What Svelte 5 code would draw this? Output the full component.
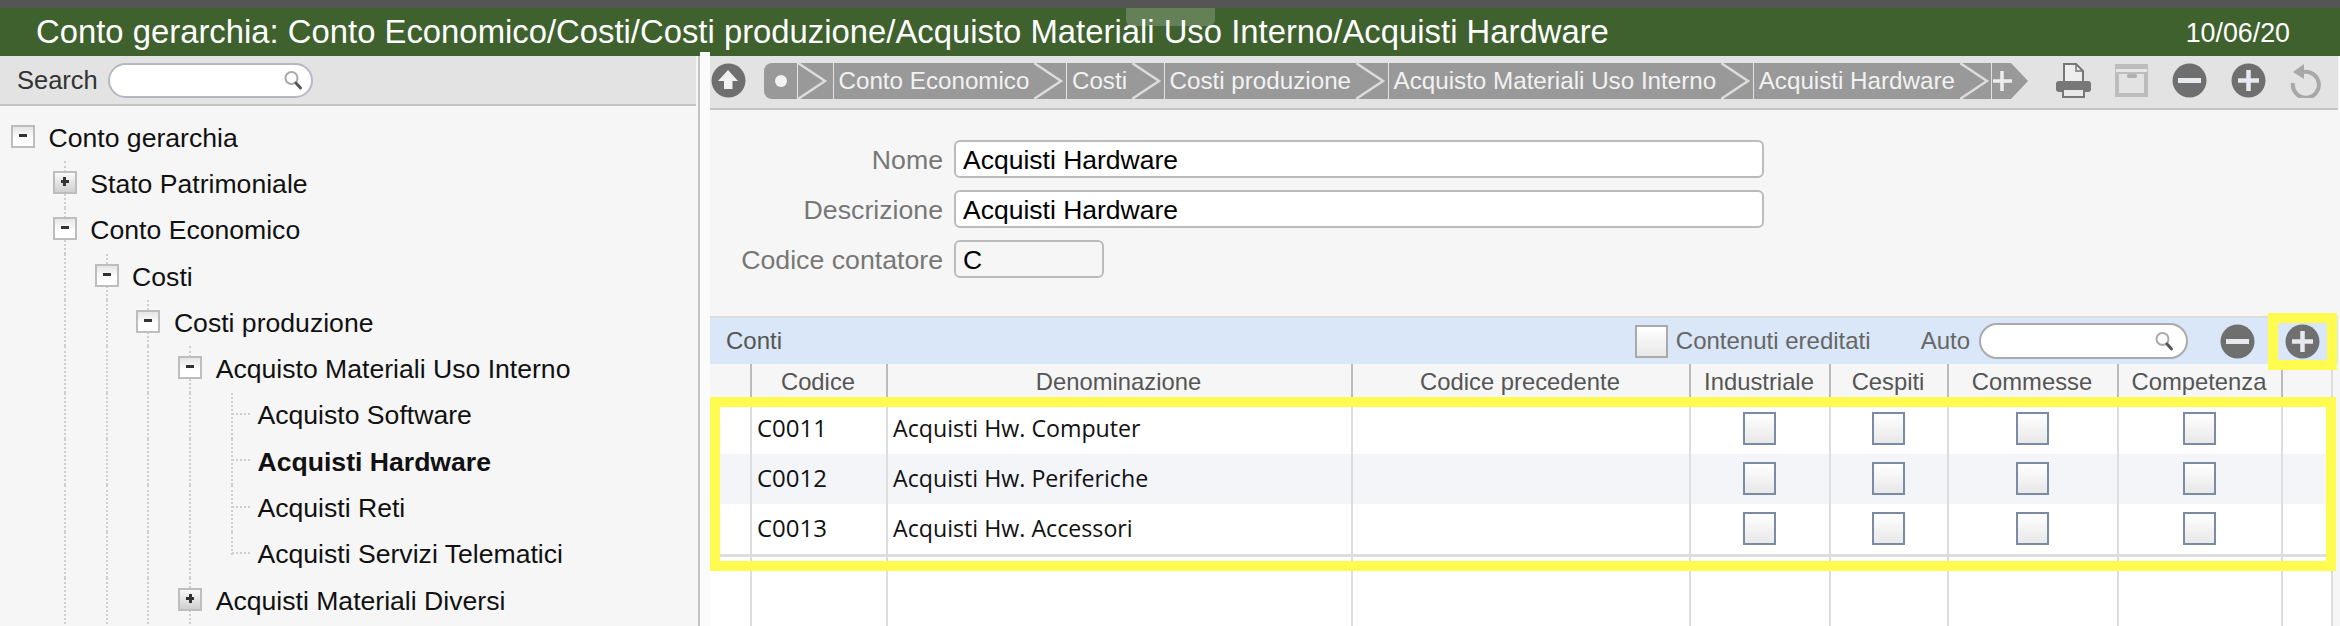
<script>
	const crumbs = ['Conto Economico', 'Costi', 'Costi produzione', 'Acquisto Materiali Uso Interno', 'Acquisti Hardware'];

	// guides: depths that still have a dotted line running through this row
	const tree = [
		{ label: 'Conto gerarchia', depth: 0, toggle: 'minus', guides: [] },
		{ label: 'Stato Patrimoniale', depth: 1, toggle: 'plus', guides: [1] },
		{ label: 'Conto Economico', depth: 1, toggle: 'minus', guides: [1] },
		{ label: 'Costi', depth: 2, toggle: 'minus', guides: [1, 2] },
		{ label: 'Costi produzione', depth: 3, toggle: 'minus', guides: [1, 2, 3] },
		{ label: 'Acquisto Materiali Uso Interno', depth: 4, toggle: 'minus', guides: [1, 2, 3, 4] },
		{ label: 'Acquisto Software', depth: 5, guides: [1, 2, 3, 4, 5] },
		{ label: 'Acquisti Hardware', depth: 5, guides: [1, 2, 3, 4, 5], current: true },
		{ label: 'Acquisti Reti', depth: 5, guides: [1, 2, 3, 4, 5] },
		{ label: 'Acquisti Servizi Telematici', depth: 5, guides: [1, 2, 3, 4, 5], last: true },
		{ label: 'Acquisti Materiali Diversi', depth: 4, toggle: 'plus', guides: [1, 2, 3, 4] }
	];

	const columns = ['', 'Codice', 'Denominazione', 'Codice precedente', 'Industriale', 'Cespiti', 'Commesse', 'Competenza', ''];

	const rows = [
		{ code: 'C0011', name: 'Acquisti Hw. Computer' },
		{ code: 'C0012', name: 'Acquisti Hw. Periferiche' },
		{ code: 'C0013', name: 'Acquisti Hw. Accessori' }
	];
</script>

{#snippet magnifier()}
	<svg class="magnifier" width="20" height="22" viewBox="0 0 20 22">
		<circle cx="8.5" cy="9" r="6" fill="#fff" stroke="#a9a9a9" stroke-width="2" />
		<path d="M13 14l4.5 5" stroke="#555" stroke-width="3" stroke-linecap="round" />
	</svg>
{/snippet}

{#snippet circleIcon(kind)}
	<svg width="35" height="35" viewBox="0 0 35 35">
		<circle cx="17.5" cy="17.5" r="17" fill="#6f6f6f" />
		{#if kind === 'plus'}
			<path d="M17.5 7v21M7 17.5h21" stroke="#e6e9ee" stroke-width="4.5" />
		{:else if kind === 'minus'}
			<path d="M6 17.5h23" stroke="#e6e9ee" stroke-width="5" />
		{:else}
			<path d="M17 7l10 11h-5.5v8h-8.5v-8h-6z" fill="#f0f0f0" />
		{/if}
	</svg>
{/snippet}

{#snippet chevron()}
	<svg class="chevron" width="31.5" height="36" viewBox="0 0 31.5 36">
		<path d="M0 0l27 18L0 36" fill="none" stroke="#dcdcdc" stroke-width="2.5" />
	</svg>
{/snippet}

<div class="page">
	<div class="topline"></div>
	<header class="title">
		<span>Conto gerarchia: Conto Economico/Costi/Costi produzione/Acquisto Materiali Uso Interno/Acquisti Hardware</span>
		<span class="date">10/06/20</span>
	</header>

	<div class="main">
		<aside class="left">
			<div class="search">
				<span>Search</span>
				<div class="pill">{@render magnifier()}</div>
			</div>
			<div class="tree">
				{#each tree as node}
					<div class="node">
						{#each { length: node.depth + 1 } as _, k}
							<span
								class="cell"
								class:line={node.guides.includes(k)}
								class:half={node.last && k === node.depth}
							>
								{#if k === node.depth}
									{#if node.toggle}
										<span class="toggle {node.toggle}"></span>
									{:else}
										<span class="stub"></span>
									{/if}
								{/if}
							</span>
						{/each}
						<span class="label" class:current={node.current}>{node.label}</span>
					</div>
				{/each}
			</div>
		</aside>

		<div class="splitter"></div>

		<section class="right">
			<div class="toolbar">
				{@render circleIcon('up')}
				<nav class="crumbs">
					<span class="home"><i></i></span>
					<span class="crumb blank">{@render chevron()}</span>
					{#each crumbs as crumb}
						<span class="crumb"><b>{crumb}</b>{@render chevron()}</span>
					{/each}
					<svg class="add" width="36" height="36" viewBox="0 0 36 36">
						<path d="M0 0h19l17 18-17 18H0z" fill="#999" />
						<path d="M10 8v20M1 18h19" stroke="#eee" stroke-width="3.5" />
					</svg>
				</nav>
				<div class="tools">
					<svg width="35" height="35" viewBox="0 0 35 35">
						<path d="M8 19V1h12l7 7v11" fill="#eee" stroke="#777" stroke-width="2" />
						<path d="M20 1v7h7" fill="none" stroke="#777" stroke-width="1.5" />
						<rect x="0" y="18" width="35" height="11" rx="3" fill="#777" />
						<path d="M7 26h21v8H7z" fill="#e8e8e8" stroke="#777" stroke-width="2" />
					</svg>
					<svg width="33" height="33" viewBox="0 0 33 33">
						<rect width="33" height="33" fill="#bdbdbd" />
						<rect x="1" y="5" width="31" height="3" fill="#e6e6e6" />
						<rect x="4" y="10" width="25" height="19" fill="#e3e3e3" />
						<rect x="12" y="10" width="10" height="4" rx="1.5" fill="#b0b0b0" />
					</svg>
					{@render circleIcon('minus')}
					{@render circleIcon('plus')}
					<svg width="31" height="35" viewBox="0 0 31 35">
						<path d="M9.5 10.5A13 13 0 1 1 3 20" fill="none" stroke="#a8a8a8" stroke-width="4" />
						<path d="M14 1v15L3 9z" fill="#a8a8a8" />
					</svg>
				</div>
			</div>

			<div class="form">
				<label for="nome">Nome</label>
				<input id="nome" value="Acquisti Hardware" readonly />
				<label for="descr">Descrizione</label>
				<input id="descr" value="Acquisti Hardware" readonly />
				<label for="cod">Codice contatore</label>
				<input id="cod" class="short" value="C" readonly />
			</div>

			<div class="bar">
				<span class="bar-title">Conti</span>
				<span class="inherit">
					<input type="checkbox" class="box plain" />
					<span>Contenuti ereditati</span>
				</span>
				<span class="auto">Auto</span>
				<div class="pill bar-pill">{@render magnifier()}</div>
				<span class="bar-minus">{@render circleIcon('minus')}</span>
				<span class="bar-plus">{@render circleIcon('plus')}</span>
			</div>

			<div class="table">
				<div class="grid head">
					{#each columns as col}
						<div class="th">{col}</div>
					{/each}
				</div>
				{#each rows as row}
					<div class="grid tr">
						<div class="td"></div>
						<div class="td text code">{row.code}</div>
						<div class="td text">{row.name}</div>
						<div class="td"></div>
						{#each { length: 4 } as _}
							<div class="td center"><input type="checkbox" class="box" /></div>
						{/each}
						<div class="td"></div>
					</div>
				{/each}
				<div class="grid filler">
					{#each columns as _}
						<div class="td"></div>
					{/each}
				</div>
			</div>
		</section>
	</div>

	<div class="mark mark-table"></div>
	<div class="mark mark-add"></div>
	<div class="notch"></div>
</div>

<style>
	:global(body) {
		margin: 0;
	}

	.page {
		position: relative;
		width: 2340px;
		height: 626px;
		overflow: hidden;
		display: flex;
		flex-direction: column;
		background: #f6f6f6;
		font-family: 'Liberation Sans', Arial, sans-serif;
	}

	.topline {
		height: 8px;
		background: #555;
		flex-shrink: 0;
	}

	.title {
		height: 48px;
		flex-shrink: 0;
		display: flex;
		align-items: center;
		justify-content: space-between;
		padding: 0 50px 1px 36px;
		box-sizing: border-box;
		background: #3e612e;
		color: #fff;
		font-size: 32.85px;
	}

	.date {
		font-size: 26.8px;
		padding-top: 3px;
	}

	.main {
		flex: 1;
		display: flex;
		min-height: 0;
	}

	.left {
		width: 696px;
		flex-shrink: 0;
		background: #f6f6f6;
	}

	.search {
		height: 50px;
		box-sizing: border-box;
		display: flex;
		align-items: center;
		gap: 10px;
		padding: 0 0 0 17px;
		background: #e3e3e3;
		border-bottom: 2px solid #c4c4c4;
		font-size: 25.5px;
		color: #333;
	}

	.pill {
		width: 205px;
		height: 35px;
		box-sizing: border-box;
		display: flex;
		align-items: center;
		justify-content: flex-end;
		padding-right: 8px;
		background: #fff;
		border: 2px solid #b6b9c2;
		border-radius: 18px;
	}

	.tree {
		padding: 9px 0 0 11px;
	}

	.node {
		height: 46.3px;
		display: flex;
		align-items: stretch;
	}

	.cell {
		position: relative;
		width: 24px;
		display: flex;
		align-items: center;
		flex-shrink: 0;
		margin-right: 17.8px;
	}

	.cell:nth-last-child(2) {
		margin-right: 13.5px;
	}

	.cell.line::before {
		content: '';
		position: absolute;
		left: 11px;
		top: 0;
		bottom: 0;
		border-left: 2px dotted #cfcfcf;
	}

	.cell.half::before {
		bottom: 50%;
	}

	.stub {
		position: relative;
		left: 12px;
		top: -2px;
		width: 18px;
		border-top: 2px dotted #cfcfcf;
	}

	.toggle {
		position: relative;
		top: -2px;
		width: 24px;
		height: 23px;
		box-sizing: border-box;
		border: 2px solid #bdbdbd;
		background: linear-gradient(#e6e6e6, #fff 60%);
	}

	.toggle.plus {
		background: linear-gradient(#fafafa, #cfcfcf);
	}

	.toggle::before {
		content: '';
		position: absolute;
		left: 6px;
		top: 7px;
		width: 8px;
		height: 3px;
		background: #333;
	}

	.toggle.plus::after {
		content: '';
		position: absolute;
		left: 8.5px;
		top: 4px;
		width: 3px;
		height: 9px;
		background: #333;
	}

	.label {
		align-self: center;
		font-size: 26.6px;
		color: #111;
		white-space: nowrap;
	}

	.label.current {
		font-weight: 700;
	}

	.splitter {
		width: 2px;
		margin: 0 10px 0 2px;
		background: #c4c4c4;
		flex-shrink: 0;
		box-shadow: 6px 0 0 4px #fbfbfb;
	}

	.right {
		width: 1628px;
		flex-shrink: 0;
		display: flex;
		flex-direction: column;
		min-height: 0;
	}

	.toolbar {
		height: 54px;
		box-sizing: border-box;
		display: flex;
		align-items: center;
		padding: 0 17px 3px 1px;
		background: #e3e3e3;
		border-bottom: 2px solid #c4c4c4;
	}

	.crumbs {
		display: flex;
		align-items: center;
		margin-left: 18px;
		height: 36px;
	}

	.home {
		width: 33px;
		height: 36px;
		display: flex;
		align-items: center;
		justify-content: center;
		background: #999;
		border-radius: 8px 0 0 8px;
	}

	.home i {
		width: 12px;
		height: 12px;
		border-radius: 50%;
		background: #f2f2f2;
	}

	.crumb {
		height: 36px;
		display: flex;
		align-items: center;
		background: #999;
		border-left: 1px solid #e3e3e3;
		color: #f2f2f2;
		font-size: 24.2px;
		white-space: nowrap;
	}

	.crumb.blank {
		padding-right: 3px;
	}

	.crumb b {
		font-weight: 400;
		padding: 0 5px 0 5px;
	}

	.chevron {
		flex-shrink: 0;
	}

	.add {
		margin-left: 1px;
	}

	.tools {
		margin-left: auto;
		display: flex;
		align-items: center;
		gap: 24px;
	}

	.form {
		height: 206px;
		box-sizing: border-box;
		padding-top: 30px;
		display: grid;
		grid-template-columns: 233px 810px;
		grid-auto-rows: 38px;
		column-gap: 11px;
		row-gap: 12px;
		align-content: start;
	}

	.form label {
		text-align: right;
		font-size: 26.7px;
		line-height: 40px;
		color: #777;
	}

	.form input {
		box-sizing: border-box;
		width: 100%;
		height: 38px;
		padding: 2px 7px 0;
		border: 2px solid #bbb;
		border-radius: 6px;
		background: #fff;
		color: #000;
		font-family: inherit;
		font-size: 26.5px;
		outline: none;
	}

	.form input.short {
		width: 150px;
		background: #f6f6f6;
	}

	.bar {
		height: 48px;
		box-sizing: border-box;
		display: flex;
		align-items: center;
		padding-left: 16px;
		background: #dae7f8;
		border-top: 2px solid #ddd;
		color: #666;
		font-size: 24px;
	}

	.bar-title {
		color: #555;
	}

	.inherit {
		margin-left: auto;
		display: flex;
		align-items: center;
		gap: 8px;
	}

	.auto {
		margin-left: 50px;
	}

	.bar-pill {
		width: 209px;
		height: 36px;
		margin-left: 9px;
		padding-right: 12px;
		border-color: #aaa;
	}

	.bar-minus {
		margin-left: 32px;
		display: flex;
	}

	.bar-plus {
		margin: 0 18px 0 30px;
		display: flex;
	}

	.table {
		flex: 1;
		display: flex;
		flex-direction: column;
		width: 1621px;
		background: #fff;
		border-right: 2px solid #ddd;
		min-height: 0;
	}

	.grid {
		display: grid;
		grid-template-columns: 40px 136px 465px 338px 140px 118px 170px 164px 50px;
	}

	.head {
		height: 40px;
		background: #f6f6f6;
	}

	.th {
		height: 36px;
		line-height: 36px;
		padding-right: 2px;
		text-align: center;
		font-size: 23.8px;
		color: #555;
		border-left: 2px solid #bbb;
		box-sizing: border-box;
		white-space: nowrap;
	}

	.th:first-child,
	.td:first-child {
		border-left: none;
	}

	.tr {
		height: 50px;
	}

	.tr:nth-child(3) {
		background: #f4f5f9;
	}

	.td {
		border-left: 2px solid #ddd;
		box-sizing: border-box;
		min-width: 0;
	}

	.td.text {
		display: flex;
		align-items: center;
		padding: 0 0 3px 5px;
		font-family: 'Open Sans', sans-serif;
		font-size: 23.2px;
		color: #111;
		white-space: nowrap;
	}

	.td.code {
		font-size: 24px;
	}

	.td.center {
		display: flex;
		align-items: center;
		justify-content: center;
		padding: 0 2px 1px 0;
	}

	.filler {
		flex: 1;
		border-top: 3px solid #ddd;
	}

	.box {
		appearance: none;
		width: 33px;
		height: 33px;
		margin: 0;
		box-sizing: border-box;
		border: 2px solid #7b8ba3;
		background: linear-gradient(#fff, #e8e8e8);
	}

	.box.plain {
		border-color: #aaa;
	}

	.mark {
		position: absolute;
		box-sizing: border-box;
		border: 10px solid #fffb4f;
		pointer-events: none;
	}

	.mark-table {
		left: 710px;
		top: 397px;
		width: 1626px;
		height: 174px;
	}

	.mark-add {
		left: 2268px;
		top: 313px;
		width: 69px;
		height: 57px;
	}

	.notch {
		position: absolute;
		left: 1126px;
		top: 8px;
		width: 89px;
		height: 18px;
		background: rgba(255, 255, 255, 0.2);
		border-radius: 0 0 6px 6px;
	}
</style>
